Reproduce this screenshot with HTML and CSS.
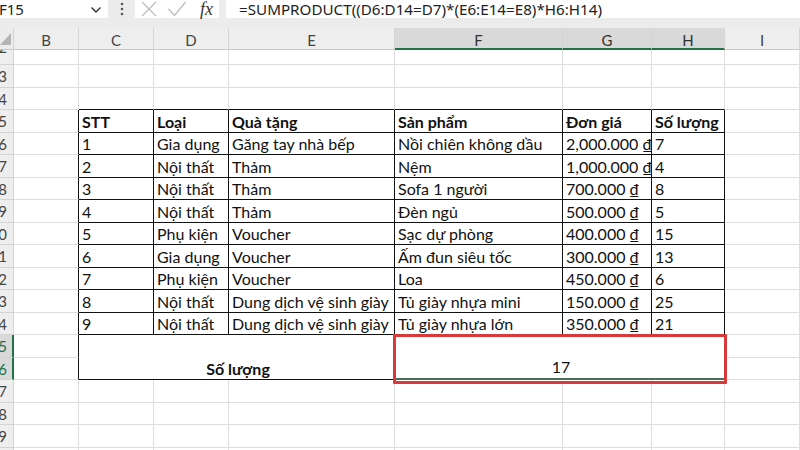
FILE: index.html
```html
<!DOCTYPE html>
<html lang="vi">
<head>
<meta charset="utf-8">
<title>Excel SUMPRODUCT</title>
<link rel="stylesheet" href="styles.css">
</head>
<body>
<div class="app">
  <div class="fbar">
    <div class="namebox">
      <span class="nb-text">F15</span>
      <svg class="chev" width="12" height="8" viewBox="0 0 12 8"><path d="M1.5 1.5 L6 6 L10.5 1.5" fill="none" stroke="#333" stroke-width="1.4"/></svg>
    </div>
    <div class="dots">
      <svg width="4" height="14" viewBox="0 0 4 14"><circle cx="2" cy="2" r="1.3" fill="#555"/><circle cx="2" cy="7" r="1.3" fill="#555"/><circle cx="2" cy="12" r="1.3" fill="#555"/></svg>
    </div>
    <div class="fbtns">
      <svg class="ic" width="18" height="18" viewBox="0 0 18 18"><path d="M2 2 L16 16 M16 2 L2 16" stroke="#bdbdbd" stroke-width="1.3" fill="none"/></svg>
      <svg class="ic" width="20" height="18" viewBox="0 0 20 18"><path d="M1.5 9 L7.5 15.5 L18.5 2" stroke="#bdbdbd" stroke-width="1.3" fill="none"/></svg>
      <span class="fx">fx</span>
    </div>
    <div class="formula">=SUMPRODUCT((D6:D14=D7)*(E6:E14=E8)*H6:H14)</div>
  </div>

  <div class="sheet">
    <!-- column headers -->
    <div class="corner"><svg width="12" height="14" viewBox="0 0 12 14"><polygon points="11,1 11,13 0,13" fill="#b5b5b5"/></svg></div>
    <div class="ch">B</div><div class="ch">C</div><div class="ch">D</div><div class="ch">E</div>
    <div class="ch sel">F</div><div class="ch sel">G</div><div class="ch sel">H</div><div class="ch">I</div>

    <!-- row 2 -->
    <div class="rh r2"><span>2</span></div>
    <div class="c"></div><div class="c"></div><div class="c"></div><div class="c"></div><div class="c"></div><div class="c"></div><div class="c"></div><div class="c"></div>
    <!-- row 3 -->
    <div class="rh"><span>3</span></div>
    <div class="c"></div><div class="c"></div><div class="c"></div><div class="c"></div><div class="c"></div><div class="c"></div><div class="c"></div><div class="c"></div>
    <!-- row 4 -->
    <div class="rh"><span>4</span></div>
    <div class="c"></div><div class="c tt"></div><div class="c tt"></div><div class="c tt"></div><div class="c tt"></div><div class="c tt"></div><div class="c tt"></div><div class="c"></div>
    <!-- row 5 -->
    <div class="rh"><span>5</span></div>
    <div class="c tl"></div>
    <div class="c t b">STT</div><div class="c t b">Loại</div><div class="c t b">Quà tặng</div><div class="c t b">Sản phẩm</div><div class="c t b">Đơn giá</div><div class="c t b">Số lượng</div>
    <div class="c"></div>
    <!-- row 6 -->
    <div class="rh"><span>6</span></div>
    <div class="c tl"></div>
    <div class="c t">1</div><div class="c t">Gia dụng</div><div class="c t">Găng tay nhà bếp</div><div class="c t">Nồi chiên không dầu</div><div class="c t">2,000.000 ₫</div><div class="c t">7</div>
    <div class="c"></div>
    <!-- row 7 -->
    <div class="rh"><span>7</span></div>
    <div class="c tl"></div>
    <div class="c t">2</div><div class="c t">Nội thất</div><div class="c t">Thảm</div><div class="c t">Nệm</div><div class="c t">1,000.000 ₫</div><div class="c t">4</div>
    <div class="c"></div>
    <!-- row 8 -->
    <div class="rh"><span>8</span></div>
    <div class="c tl"></div>
    <div class="c t">3</div><div class="c t">Nội thất</div><div class="c t">Thảm</div><div class="c t">Sofa 1 người</div><div class="c t">700.000 ₫</div><div class="c t">8</div>
    <div class="c"></div>
    <!-- row 9 -->
    <div class="rh"><span>9</span></div>
    <div class="c tl"></div>
    <div class="c t">4</div><div class="c t">Nội thất</div><div class="c t">Thảm</div><div class="c t">Đèn ngủ</div><div class="c t">500.000 ₫</div><div class="c t">5</div>
    <div class="c"></div>
    <!-- row 10 -->
    <div class="rh"><span>10</span></div>
    <div class="c tl"></div>
    <div class="c t">5</div><div class="c t">Phụ kiện</div><div class="c t">Voucher</div><div class="c t">Sạc dự phòng</div><div class="c t">400.000 ₫</div><div class="c t">15</div>
    <div class="c"></div>
    <!-- row 11 -->
    <div class="rh"><span>11</span></div>
    <div class="c tl"></div>
    <div class="c t">6</div><div class="c t">Gia dụng</div><div class="c t">Voucher</div><div class="c t">Ấm đun siêu tốc</div><div class="c t">300.000 ₫</div><div class="c t">13</div>
    <div class="c"></div>
    <!-- row 12 -->
    <div class="rh"><span>12</span></div>
    <div class="c tl"></div>
    <div class="c t">7</div><div class="c t">Phụ kiện</div><div class="c t">Voucher</div><div class="c t">Loa</div><div class="c t">450.000 ₫</div><div class="c t">6</div>
    <div class="c"></div>
    <!-- row 13 -->
    <div class="rh"><span>13</span></div>
    <div class="c tl"></div>
    <div class="c t">8</div><div class="c t">Nội thất</div><div class="c t">Dung dịch vệ sinh giày</div><div class="c t">Tủ giày nhựa mini</div><div class="c t">150.000 ₫</div><div class="c t">25</div>
    <div class="c"></div>
    <!-- row 14 -->
    <div class="rh"><span>14</span></div>
    <div class="c tl"></div>
    <div class="c t">9</div><div class="c t">Nội thất</div><div class="c t">Dung dịch vệ sinh giày</div><div class="c t">Tủ giày nhựa lớn</div><div class="c t">350.000 ₫</div><div class="c t">21</div>
    <div class="c"></div>
    <!-- rows 15-16 -->
    <div class="rh hl"><span>15</span></div>
    <div class="c tl"></div>
    <div class="c t b merge-label">Số lượng</div>
    <div class="c merge-val">17</div>
    <div class="c"></div>
    <div class="rh hl"><span>16</span></div>
    <div class="c tl"></div>
    <div class="c"></div>
    <!-- row 17 -->
    <div class="rh"><span>17</span></div>
    <div class="c"></div><div class="c"></div><div class="c"></div><div class="c"></div><div class="c"></div><div class="c"></div><div class="c"></div><div class="c"></div>
    <!-- row 18 -->
    <div class="rh"><span>18</span></div>
    <div class="c"></div><div class="c"></div><div class="c"></div><div class="c"></div><div class="c"></div><div class="c"></div><div class="c"></div><div class="c"></div>
    <!-- row 19 -->
    <div class="rh"><span>19</span></div>
    <div class="c"></div><div class="c"></div><div class="c"></div><div class="c"></div><div class="c"></div><div class="c"></div><div class="c"></div><div class="c"></div>
    <!-- row 20 -->
    <div class="rh"><span>20</span></div>
    <div class="c"></div><div class="c"></div><div class="c"></div><div class="c"></div><div class="c"></div><div class="c"></div><div class="c"></div><div class="c"></div>
  </div>
</div>
</body>
</html>
```

FILE: styles.css
```css
* { box-sizing: border-box; }
html, body { margin: 0; padding: 0; }
body {
  width: 800px;
  height: 450px;
  overflow: hidden;
  background: #ffffff;
  font-family: Lato, "Noto Sans", sans-serif;
  color: #111;
}
.app {
  display: flex;
  flex-direction: column;
  width: 800px;
  height: 450px;
}

/* formula bar */
.fbar {
  height: 28px;
  flex: none;
  display: flex;
  align-items: flex-start;
  background: #ececec;
  padding-bottom: 10px;
}
.namebox {
  width: 108px;
  height: 18px;
  background: #fff;
  display: flex;
  align-items: center;
  justify-content: space-between;
  padding: 0 6px 0 0;
}
.nb-text {
  font-family: "Noto Sans", sans-serif;
  font-size: 15px;
  line-height: 18px;
  color: #222;
  margin-left: -1px;
}
.chev { margin-top: 2px; }
.dots {
  width: 27px;
  height: 18px;
  display: flex;
  align-items: center;
  justify-content: center;
}
.fbtns {
  width: 84px;
  height: 18px;
  background: #fff;
  display: flex;
  align-items: center;
  gap: 9px;
  padding-left: 5px;
}
.ic { flex: none; }
.fx {
  font-family: "Liberation Serif", serif;
  font-style: italic;
  font-size: 18px;
  line-height: 18px;
  color: #333;
  margin-left: 4px;
}
.formula {
  flex: 1;
  height: 18px;
  margin-left: 7px;
  background: #fff;
  font-family: "Noto Sans", sans-serif;
  font-size: 15.2px;
  color: #222;
  padding-left: 13px;
  line-height: 18px;
  white-space: nowrap;
}

/* sheet grid */
.sheet {
  flex: 1;
  display: grid;
  grid-template-columns: 14px 65px 75px 75px 166px 168px 89px 73px 75px;
  grid-template-rows: 22px 15px 23px 22px repeat(7, 23px 22px) 23px 22px;
  overflow: hidden;
}
.corner {
  background: #ececec;
  border-right: 1px solid #d4d4d4;
  border-bottom: 1px solid #c8c8c8;
  display: flex;
  align-items: flex-end;
  justify-content: flex-start;
  padding-bottom: 3px;
}
.ch {
  background: #eeeeee;
  border-right: 1px solid #d4d4d4;
  border-bottom: 1px solid #c8c8c8;
  display: flex;
  align-items: center;
  justify-content: center;
  font-size: 15px;
  color: #444;
  padding-top: 3px;
}
.ch.sel {
  background: #d9d9d9;
  border-bottom: 2px solid #217346;
  color: #333;
}
.rh {
  background: #eeeeee;
  border-right: 1px solid #d4d4d4;
  border-bottom: 1px solid #d4d4d4;
  display: flex;
  align-items: center;
  justify-content: flex-end;
  overflow: hidden;
  font-size: 15px;
  color: #444;
  padding-right: 6px;
}
.rh span { flex: none; }
.rh.r2 { align-items: flex-end; padding-bottom: 8px; }
.rh.hl {
  background: #d9d9d9;
  color: #217346;
  border-right: 2px solid #217346;
  padding-right: 5px;
}
.c {
  border-right: 1px solid #dedede;
  border-bottom: 1px solid #dedede;
  display: flex;
  align-items: center;
  padding-left: 3px;
  font-size: 16px;
  white-space: nowrap;
  overflow: hidden;
  color: #111;
}
.c.t {
  border-right: 1px solid #111;
  border-bottom: 1px solid #111;
}
.c.tl { border-right: 1px solid #111; }
.c.tt { border-bottom: 1px solid #111; }
.c.b { font-weight: 700; }
.merge-label {
  grid-column: span 3;
  grid-row: span 2;
  justify-content: center;
  align-items: flex-end;
  padding-bottom: 1px;
}
.merge-val {
  grid-column: span 3;
  grid-row: span 2;
  justify-content: center;
  align-items: flex-end;
  padding-bottom: 2px;
  border-bottom: 2px solid #4d6b57;
  border-right: 1px solid #111;
  position: relative;
  overflow: visible;
}
.merge-val::after {
  content: "";
  position: absolute;
  left: -2px;
  top: -1px;
  right: -3px;
  bottom: -6px;
  border: 3px solid #d9393b;
  border-radius: 1px;
  pointer-events: none;
}
```
